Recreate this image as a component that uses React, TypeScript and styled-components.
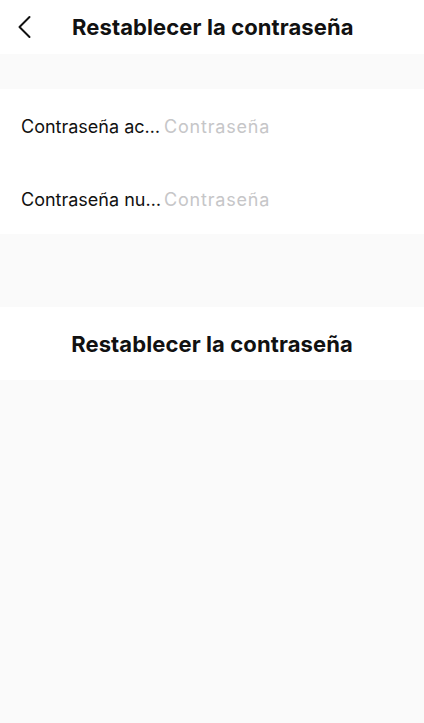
import React from 'react'
import styled, { createGlobalStyle } from 'styled-components'

const GlobalStyle = createGlobalStyle`
	html, body {
		margin: 0;
		padding: 0;
		background: #fafafa;
		font-family: Inter, 'Noto Sans', sans-serif;
		color: #111;
	}
`

const Page = styled.div`
	width: 424px;
	min-height: 723px;
	background: #fafafa;
	display: flex;
	flex-direction: column;
`

const Header = styled.header`
	height: 54px;
	background: #fff;
	display: flex;
	align-items: center;
	padding-left: 17px;
	gap: 41px;
`

const BackButton = styled.button`
	border: 0;
	background: none;
	padding: 0;
	width: 14px;
	height: 24px;
	display: flex;
	align-items: center;
	justify-content: center;
	color: #111;
`

const Title = styled.h1`
	margin: 0;
	font-size: 22px;
	font-weight: 700;
	letter-spacing: 0.1px;
`

const Section = styled.section<{ $top: number }>`
	margin-top: ${(p) => p.$top}px;
	background: #fff;
`

const Row = styled.label<{ $height: number }>`
	height: ${(p) => p.$height}px;
	display: flex;
	align-items: center;
	padding: 2px 21px 0;
	box-sizing: border-box;
	font-size: 18px;
`

const FieldLabel = styled.span`
	width: 143px;
	flex-shrink: 0;
	white-space: nowrap;
	color: #111;
`

const Input = styled.input`
	flex: 1;
	min-width: 0;
	border: 0;
	outline: none;
	padding: 0;
	font: inherit;
	letter-spacing: 0.8px;
	background: transparent;
	&::placeholder {
		color: #c6c6c8;
	}
`

const SubmitButton = styled.button`
	width: 100%;
	height: 73px;
	border: 0;
	background: #fff;
	font-family: inherit;
	font-size: 22px;
	font-weight: 700;
	color: #111;
	letter-spacing: 0.1px;
`

const ChevronLeft = () => (
	<svg width="14" height="24" viewBox="0 0 14 24" fill="none">
		<path d="M12.5 2 L2.5 12 L12.5 22" stroke="currentColor" strokeWidth="2" strokeLinecap="round" strokeLinejoin="round" />
	</svg>
)

export default function App() {
	return (
		<>
			<GlobalStyle />
			<Page>
				<Header>
					<BackButton aria-label="Atrás">
						<ChevronLeft />
					</BackButton>
					<Title>Restablecer la contraseña</Title>
				</Header>
				<Section $top={35}>
					<Row $height={73}>
						<FieldLabel title="Contraseña actual">Contraseña ac…</FieldLabel>
						<Input type="password" placeholder="Contraseña" />
					</Row>
					<Row $height={72}>
						<FieldLabel title="Contraseña nueva">Contraseña nu…</FieldLabel>
						<Input type="password" placeholder="Contraseña" />
					</Row>
				</Section>
				<Section $top={73}>
					<SubmitButton>Restablecer la contraseña</SubmitButton>
				</Section>
			</Page>
		</>
	)
}
